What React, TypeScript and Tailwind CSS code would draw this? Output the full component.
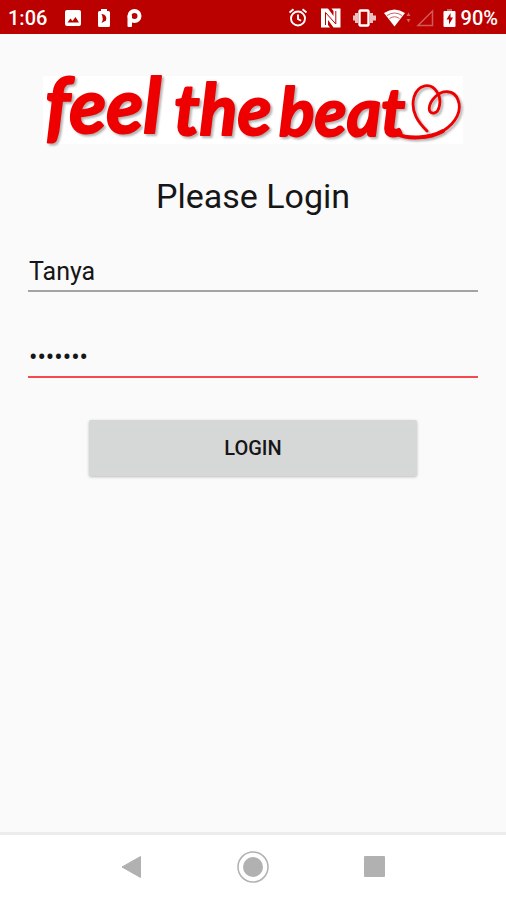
import { useState } from 'react';

function StatusBar() {
  return (
    <header className="flex h-[34px] items-center justify-between bg-[#bb0000] px-2 pt-px text-white">
      <div className="flex items-center">
        <span className="w-14 text-[20px] leading-6 font-medium">1:06</span>
        <svg className="mr-[15px] size-[18px]" viewBox="0 0 18 18" aria-hidden="true">
          <rect x="1" y="1" width="16" height="16" rx="2" fill="#fff" />
          <path d="M3.500 13.500 6.500 9.500 8.500 12 11.500 8 15 13.500Z" fill="#bb0000" />
        </svg>
        <svg className="mr-[15px] h-5 w-[14px]" viewBox="0 0 14 20" aria-hidden="true">
          <path d="M4 3V1h6v2h1.500Q13 3 13 4.500V17.500Q13 19 11.500 19H2.500Q1 19 1 17.500V4.500Q1 3 2.500 3Z" fill="#fff" />
          <path d="M5 6Q10.500 7 9 12.500L4.500 15Q7 11 4.500 6Z" fill="#bb0000" />
        </svg>
        <svg className="h-5 w-4" viewBox="0 0 16 20" aria-hidden="true">
          <circle cx="8.500" cy="8" r="5" fill="none" stroke="#fff" strokeWidth="4" />
          <rect x="1.500" y="7" width="4.500" height="12" rx="1" fill="#fff" />
        </svg>
      </div>
      <div className="flex items-center">
        <svg className="mr-3 size-5" viewBox="0 0 20 20" fill="none" stroke="#fff" strokeWidth="1.900" aria-hidden="true">
          <circle cx="9" cy="10.500" r="7" />
          <path d="M9 6.500v4.500l3 1.800M0.500 4.500 4.500 1.200M17.500 4.500l-4-3.300" />
        </svg>
        <svg className="mr-3 size-5" viewBox="0 0 20 20" aria-hidden="true">
          <path d="M0 .5H7L12.500 8V3L10.500 .5H19.500V19.500H12.500L7 12V17L9 19.500H0Z" fill="#fff" />
          <path d="M4.500 17V4.500L14.800 16V3" fill="none" stroke="#bb0000" strokeWidth="1" />
        </svg>
        <svg className="mr-[7px] h-5 w-6" viewBox="0 0 24 20" aria-hidden="true">
          <rect x="6.500" y="2.500" width="9" height="15" rx="1" fill="none" stroke="#fff" strokeWidth="2.400" />
          <path d="M3.500 5v10M18.500 5v10M0.500 7.500v5M21.500 7.500v5" stroke="#fff" strokeOpacity="0.750" strokeWidth="3" />
        </svg>
        <svg className="mr-1 h-5 w-7" viewBox="0 0 28 20" aria-hidden="true">
          <path d="M0 5Q10.500-2 21 5L10.500 18.500Z" fill="#fff" />
          <path d="M3 7.500Q10.500 2.500 18 7.500M5.500 10.500Q10.500 7 15.500 10.500" fill="none" stroke="#bb0000" strokeOpacity="0.700" strokeWidth="0.900" />
          <path d="M22.500 8 24.500 4.500 26.500 8ZM22.500 11 24.500 14.500 26.500 11Z" fill="#fff" fillOpacity="0.400" />
        </svg>
        <svg className="mr-[9px] size-[18px]" viewBox="0 0 18 18" aria-hidden="true">
          <path d="M16.500 2V16.500H2Z" fill="none" stroke="#fff" strokeOpacity="0.350" strokeWidth="1.500" />
        </svg>
        <svg className="mr-[5px] h-5 w-[13px]" viewBox="0 0 13 20" aria-hidden="true">
          <path d="M4 1h5v2H4Z" fill="#fff" fillOpacity="0.400" />
          <rect x="0.500" y="3" width="12" height="16" rx="1" fill="#fff" />
          <path d="M7.500 5 3.500 11.500H6V16.500L10 9.500H7.500Z" fill="#bb0000" />
        </svg>
        <span className="text-[20px] leading-6 font-medium">90%</span>
      </div>
    </header>
  );
}

function Logo() {
  return (
    <svg
      className="mx-auto block w-full max-w-[420px] overflow-visible bg-white"
      viewBox="0 0 420 68"
      role="img"
      aria-label="feel the beat"
    >
      <g className="drop-shadow-[2px_2px_1px_rgba(0,0,0,0.3)]">
        <g
          fill="#ee0000"
          stroke="#ee0000"
          strokeWidth="2"
          strokeLinejoin="round"
          fontFamily="Lato, sans-serif"
          fontWeight="700"
          fontStyle="italic"
        >
          <text x="2" y="57" fontSize="76">feel</text>
          <text x="131" y="59" fontSize="70">the</text>
          <text x="236" y="60" fontSize="66">beat</text>
        </g>
        <g fill="none" stroke="#ee0000" strokeLinecap="round" strokeLinejoin="round">
          <path d="M354 58C364 63 386 63 400 55" strokeWidth="4" />
          <path d="M400 55C414 46 419 34 415 24C411 13 399 14 392 21C385 28 384 38 391 37C397 36 399 23 394 16C388 6 375 8 371 21C367 36 376 47 384 55" strokeWidth="2.800" />
        </g>
      </g>
    </svg>
  );
}

function BackIcon() {
  return (
    <svg className="h-6 w-5" viewBox="0 0 20 24" aria-hidden="true">
      <path d="M0 12 18.500 1.500V22.500Z" fill="#b1b1b1" stroke="#b1b1b1" strokeLinejoin="round" />
    </svg>
  );
}

function HomeIcon() {
  return (
    <svg className="size-8" viewBox="0 0 32 32" aria-hidden="true">
      <circle cx="16" cy="16" r="15" fill="none" stroke="#b1b1b1" strokeWidth="1.500" />
      <circle cx="16" cy="16" r="10" fill="#b1b1b1" />
    </svg>
  );
}

export default function App() {
  const [name, setName] = useState('Tanya');
  const [password, setPassword] = useState('rhythm1');

  return (
    <div className="flex min-h-screen flex-col bg-[#fafafa] font-['Roboto',sans-serif] text-[#161616]">
      <StatusBar />
      <main className="flex-1 px-7 pt-[42px]">
        <Logo />
        <h1 className="mt-8 text-center text-[34px] leading-10">Please Login</h1>
        <form onSubmit={(event) => event.preventDefault()}>
          <input
            aria-label="User name"
            className="mt-9 block h-10 w-full border-b-2 border-[#a3a3a3] bg-transparent pt-px pl-px text-[25px] leading-8 outline-none"
            value={name}
            onChange={(event) => setName(event.target.value)}
          />
          <input
            aria-label="Password"
            type="password"
            className="mt-[46px] block h-10 w-full border-b-2 border-[#f4494d] bg-transparent pt-px pl-px text-[25px] leading-8 outline-none"
            value={password}
            onChange={(event) => setPassword(event.target.value)}
          />
          <div className="px-[61px] pt-[42px]">
            <button
              type="submit"
              className="block h-14 w-full rounded-[2px] bg-[#d6d7d7] text-[20px] leading-6 font-medium shadow-[0_1px_3px_rgba(0,0,0,0.25)]"
            >
              LOGIN
            </button>
          </div>
        </form>
      </main>
      <nav className="flex h-[68px] items-center justify-center gap-[89px] border-t-[3px] border-[#ececec] bg-white pb-0.5" aria-label="System navigation">
        <button type="button" aria-label="Back" className="flex w-8 justify-center">
          <BackIcon />
        </button>
        <button type="button" aria-label="Home" className="flex w-8 justify-center">
          <HomeIcon />
        </button>
        <button type="button" aria-label="Recent apps" className="flex w-8 justify-center">
          <span className="size-[21px] rounded-[1px] bg-[#b1b1b1]" />
        </button>
      </nav>
    </div>
  );
}
